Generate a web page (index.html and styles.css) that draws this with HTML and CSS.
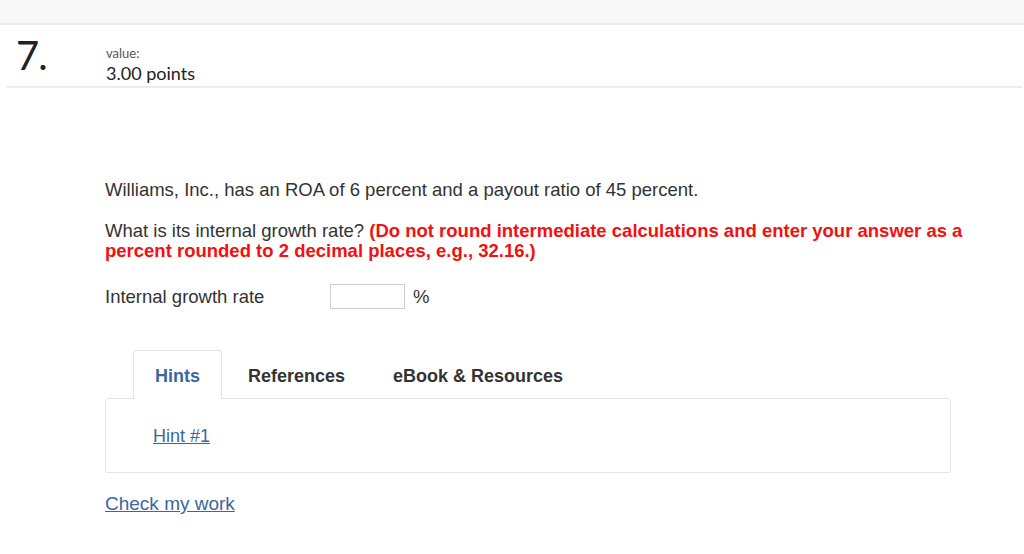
FILE: index.html
```html
<!DOCTYPE html>
<html>
<head>
<meta charset="utf-8">
<link rel="stylesheet" href="styles.css">
</head>
<body>
<div class="topbar"></div>
<div class="header">
  <div class="qnum">7.</div>
  <div class="value">
    <div class="value-label">value:</div>
    <div class="value-points">3.00 points</div>
  </div>
</div>
<div class="content">
  <p class="para">Williams, Inc., has an ROA of 6 percent and a payout ratio of 45 percent.</p>
  <p class="para">What is its internal growth rate? <span class="warn">(Do not round intermediate calculations and enter your answer as a percent rounded to 2 decimal places, e.g., 32.16.)</span></p>
  <div class="answer-row">
    <span class="answer-label">Internal growth rate</span>
    <input class="answer-input" type="text">
    <span class="answer-unit">%</span>
  </div>
  <div class="tabs">
    <div class="tab active">Hints</div>
    <div class="tab">References</div>
    <div class="tab">eBook &amp; Resources</div>
  </div>
  <div class="panel">
    <a class="link hint-link" href="#">Hint #1</a>
  </div>
  <a class="link check-link" href="#">Check my work</a>
</div>
</body>
</html>
```

FILE: styles.css
```css
html, body {
  margin: 0;
  padding: 0;
  background: #fff;
}
body {
  font-family: "Liberation Sans", Arial, sans-serif;
  color: #333;
  font-size: 18px;
}
.topbar {
  height: 23px;
  background: #f8f8f8;
  border-bottom: 2px solid #ececec;
}
.header {
  display: flex;
  align-items: flex-start;
  margin: 0 2px 0 7px;
  height: 61px;
  border-bottom: 2px solid #ececec;
}
.qnum {
  font-family: Lato, "Open Sans", sans-serif;
  font-size: 40px;
  line-height: 40px;
  color: #222;
  width: 99px;
  padding-left: 9px;
  box-sizing: border-box;
  margin-top: 10px;
  letter-spacing: -1px;
}
.value {
  font-family: Lato, "Open Sans", sans-serif;
  margin-top: 20px;
}
.value-label {
  font-size: 13px;
  line-height: 16px;
  color: #555;
}
.value-points {
  font-size: 18px;
  line-height: 24px;
  color: #222;
}
.content {
  padding-left: 105px;
  padding-top: 92px;
}
.para {
  margin: 0 0 21px 0;
  line-height: 20px;
  font-size: 18.5px;
  width: 880px;
}
.warn {
  color: #f21010;
  font-weight: bold;
}
.answer-row {
  display: flex;
  align-items: center;
  margin-top: 23px;
  font-size: 18.5px;
}
.answer-label {
  width: 225px;
}
.answer-input {
  width: 75px;
  height: 25px;
  box-sizing: border-box;
  border: 1px solid #cfcfcf;
  margin: 0;
  padding: 0;
}
.answer-unit {
  margin-left: 8px;
}
.tabs {
  display: flex;
  gap: 4px;
  margin-top: 41px;
  padding-left: 28px;
  position: relative;
  z-index: 1;
}
.tab {
  font-weight: bold;
  font-size: 18px;
  padding: 0 21px;
  height: 48px;
  line-height: 50px;
  color: #333;
  border: 1px solid transparent;
  border-bottom: none;
  border-radius: 3px 3px 0 0;
}
.tab.active {
  color: #3a67a0;
  border-color: #e4e4e4;
  background: #fff;
}
.panel {
  width: 846px;
  box-sizing: border-box;
  margin-top: -1px;
  border: 1px solid #e4e4e4;
  border-radius: 3px;
  height: 75px;
  padding-left: 47px;
  display: flex;
  align-items: center;
}
.link {
  color: #3a67a0;
  text-decoration: underline;
  font-size: 18px;
}
.hint-link {
  margin-top: 1px;
}
.check-link {
  display: inline-block;
  margin-top: 20px;
  font-size: 19px;
}
```
